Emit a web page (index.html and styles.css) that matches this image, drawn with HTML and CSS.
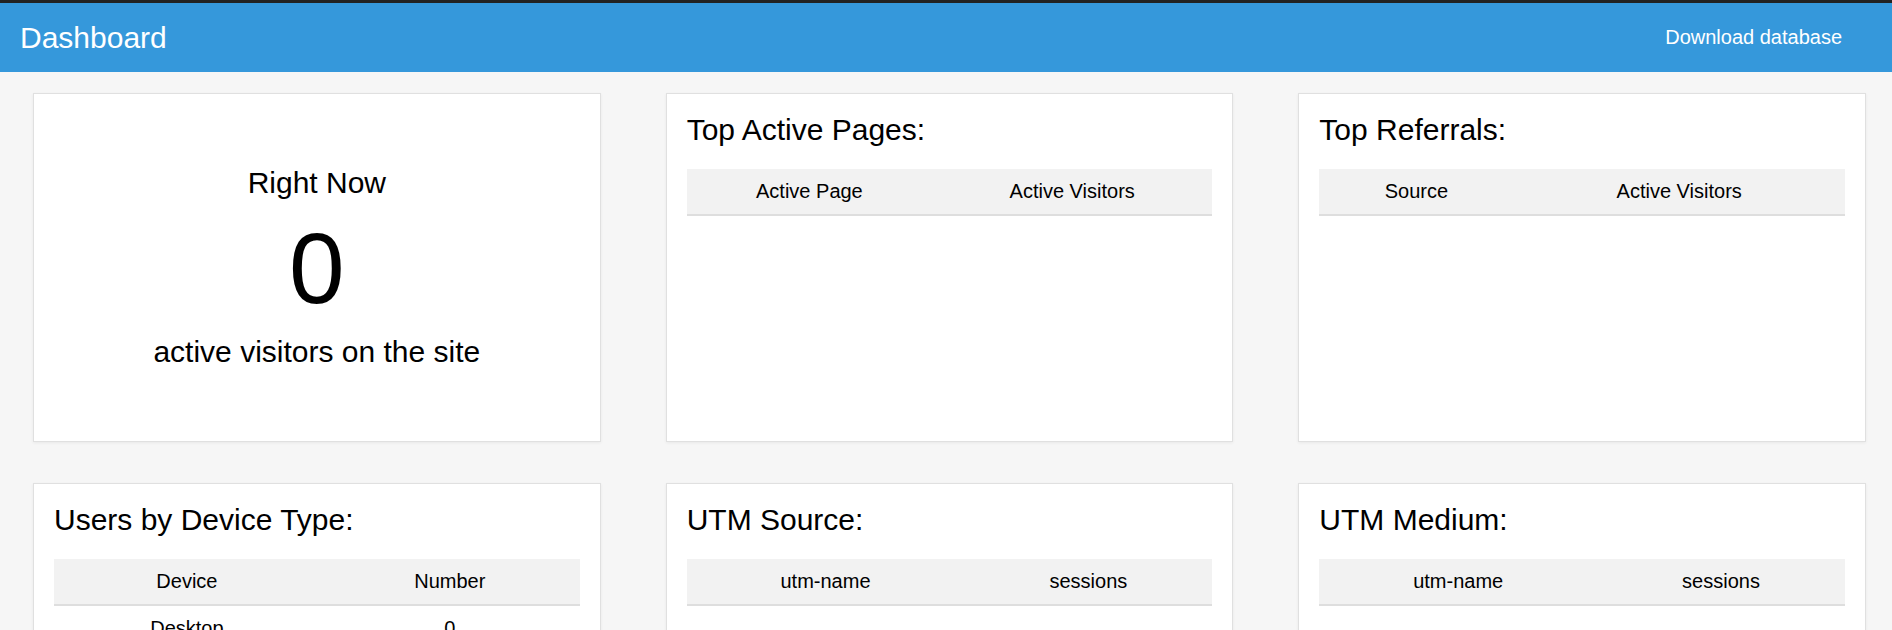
FILE: index.html
```html
<!DOCTYPE html>
<html lang="en">
<head>
<meta charset="utf-8">
<title>Dashboard</title>
<link rel="stylesheet" href="styles.css">
</head>
<body>
<header class="topbar">
  <h1 class="brand">Dashboard</h1>
  <a class="download" href="#">Download database</a>
</header>
<main class="grid">
  <section class="card card-now">
    <div class="now-label">Right Now</div>
    <div class="now-count">0</div>
    <div class="now-sub">active visitors on the site</div>
  </section>
  <section class="card">
    <h2 class="card-title">Top Active Pages:</h2>
    <table class="data">
      <thead><tr><th>Active Page</th><th>Active Visitors</th></tr></thead>
      <tbody></tbody>
    </table>
  </section>
  <section class="card">
    <h2 class="card-title">Top Referrals:</h2>
    <table class="data">
      <thead><tr><th>Source</th><th>Active Visitors</th></tr></thead>
      <tbody></tbody>
    </table>
  </section>
  <section class="card">
    <h2 class="card-title">Users by Device Type:</h2>
    <table class="data">
      <thead><tr><th>Device</th><th>Number</th></tr></thead>
      <tbody>
        <tr><td>Desktop</td><td>0</td></tr>
        <tr><td>Mobile</td><td>0</td></tr>
        <tr><td>Tablet</td><td>0</td></tr>
      </tbody>
    </table>
  </section>
  <section class="card">
    <h2 class="card-title">UTM Source:</h2>
    <table class="data">
      <thead><tr><th>utm-name</th><th>sessions</th></tr></thead>
      <tbody></tbody>
    </table>
  </section>
  <section class="card">
    <h2 class="card-title">UTM Medium:</h2>
    <table class="data">
      <thead><tr><th>utm-name</th><th>sessions</th></tr></thead>
      <tbody></tbody>
    </table>
  </section>
</main>
</body>
</html>
```
FILE: styles.css
```css
html, body {
  margin: 0;
  padding: 0;
}
body {
  background: #f6f6f6;
  font-family: "Liberation Sans", Arial, sans-serif;
  color: #000;
}
.topbar {
  box-sizing: border-box;
  height: 72px;
  border-top: 3px solid #222;
  background: #3598db;
  display: flex;
  align-items: center;
  justify-content: space-between;
  padding: 0 50px 0 20px;
}
.brand {
  margin: 0;
  font-size: 30px;
  font-weight: normal;
  color: #fff;
  line-height: 34px;
}
.download {
  color: #fff;
  text-decoration: none;
  font-size: 20px;
  line-height: 23px;
}
.grid {
  display: grid;
  grid-template-columns: 1fr 1fr 1fr;
  column-gap: 65px;
  row-gap: 41px;
  padding: 21px 26px 0 33px;
}
.card {
  box-sizing: border-box;
  min-height: 349px;
  background: #fff;
  border: 1px solid #e0e0e0;
  box-shadow: 0 1px 3px rgba(0, 0, 0, 0.06);
  padding: 19px 20px 20px;
}
.card-now {
  display: flex;
  flex-direction: column;
  justify-content: center;
  align-items: center;
  text-align: center;
  padding: 20px;
}
.now-label {
  font-size: 30px;
  margin-bottom: 11px;
}
.now-count {
  font-size: 100px;
  margin-bottom: 9px;
}
.now-sub {
  font-size: 30px;
}
.card-title {
  margin: 0 0 23px;
  font-size: 30px;
  line-height: 33px;
  font-weight: normal;
}
.data {
  width: 100%;
  border-collapse: collapse;
}
.data th {
  background: #f2f2f2;
  font-weight: normal;
  font-size: 20px;
  line-height: 23px;
  padding: 11px 12px;
  text-align: center;
  border-bottom: 2px solid #dedede;
}
.data td {
  font-size: 20px;
  line-height: 23px;
  padding: 11px 12px;
  text-align: center;
}
```
